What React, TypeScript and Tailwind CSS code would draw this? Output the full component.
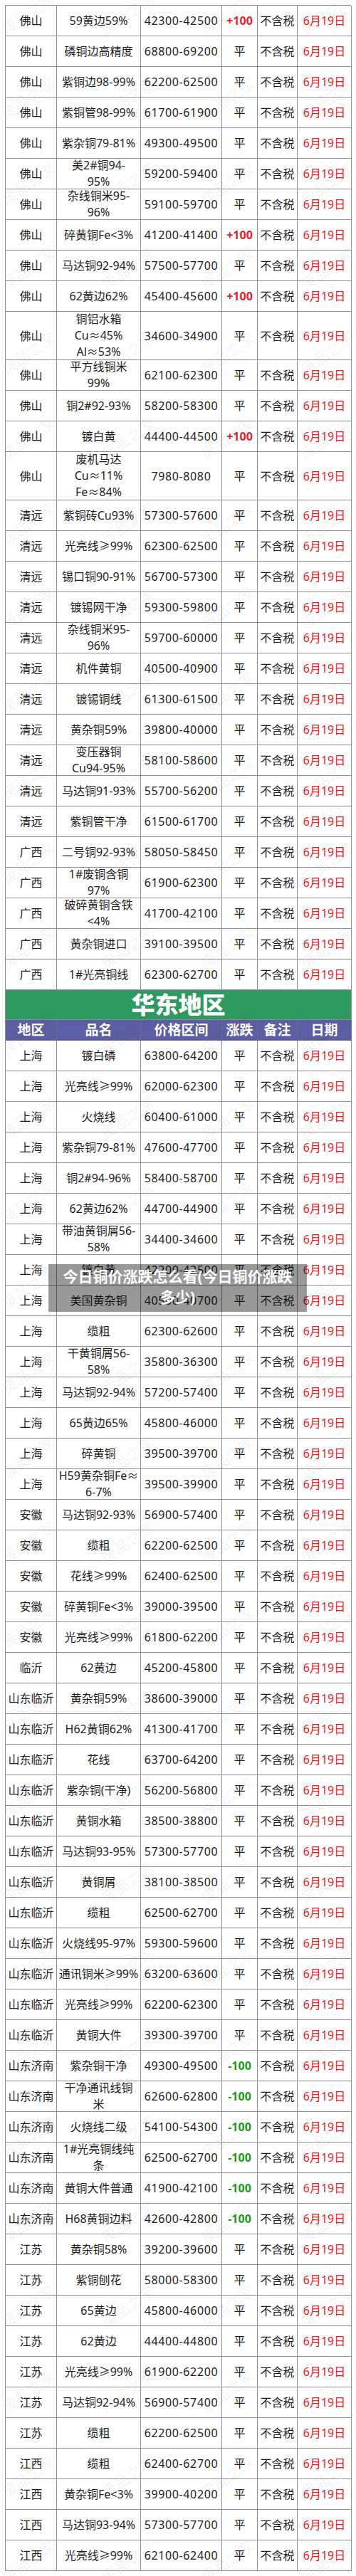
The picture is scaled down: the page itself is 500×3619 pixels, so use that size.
type Row = { r: string; p: string[]; price: string; chg: string; tall?: boolean };

// "|" splits the product name into the lines the sheet wraps it into
function row(r: string, p: string, price: string, chg = "平"): Row {
  const lines = p.split("|");
  return { r, p: lines, price, chg, tall: lines.length > 2 };
}

const SOUTH: Row[] = [
  row("佛山", "59黄边59%", "42300-42500", "+100"),
  row("佛山", "磷铜边高精度", "68800-69200"),
  row("佛山", "紫铜边98-99%", "62200-62500"),
  row("佛山", "紫铜管98-99%", "61700-61900"),
  row("佛山", "紫杂铜79-81%", "49300-49500"),
  row("佛山", "美2#铜94-|95%", "59200-59400"),
  row("佛山", "杂线铜米95-|96%", "59100-59700"),
  row("佛山", "碎黄铜Fe<3%", "41200-41400", "+100"),
  row("佛山", "马达铜92-94%", "57500-57700"),
  row("佛山", "62黄边62%", "45400-45600", "+100"),
  row("佛山", "铜铝水箱|Cu≈45%|Al≈53%", "34600-34900"),
  row("佛山", "平方线铜米|99%", "62100-62300"),
  row("佛山", "铜2#92-93%", "58200-58300"),
  row("佛山", "镀白黄", "44400-44500", "+100"),
  row("佛山", "废机马达|Cu≈11%|Fe≈84%", "7980-8080"),
  row("清远", "紫铜砖Cu93%", "57300-57600"),
  row("清远", "光亮线≥99%", "62300-62500"),
  row("清远", "锡口铜90-91%", "56700-57300"),
  row("清远", "镀锡网干净", "59300-59800"),
  row("清远", "杂线铜米95-|96%", "59700-60000"),
  row("清远", "机件黄铜", "40500-40900"),
  row("清远", "镀锡铜线", "61300-61500"),
  row("清远", "黄杂铜59%", "39800-40000"),
  row("清远", "变压器铜|Cu94-95%", "58100-58600"),
  row("清远", "马达铜91-93%", "55700-56200"),
  row("清远", "紫铜管干净", "61500-61700"),
  row("广西", "二号铜92-93%", "58050-58450"),
  row("广西", "1#废铜含铜|97%", "61900-62300"),
  row("广西", "破碎黄铜含铁|<4%", "41700-42100"),
  row("广西", "黄杂铜进口", "39100-39500"),
  row("广西", "1#光亮铜线", "62300-62700"),
];

const EAST: Row[] = [
  row("上海", "镀白磷", "63800-64200"),
  row("上海", "光亮线≥99%", "62000-62300"),
  row("上海", "火烧线", "60400-61000"),
  row("上海", "紫杂铜79-81%", "47600-47700"),
  row("上海", "铜2#94-96%", "58400-58700"),
  row("上海", "62黄边62%", "44700-44900"),
  row("上海", "带油黄铜屑56-|58%", "34400-34600"),
  row("上海", "镀白黄", "42200-42500"),
  row("上海", "美国黄杂铜", "40500-40700"),
  row("上海", "缆粗", "62300-62600"),
  row("上海", "干黄铜屑56-|58%", "35800-36300"),
  row("上海", "马达铜92-94%", "57200-57400"),
  row("上海", "65黄边65%", "45800-46000"),
  row("上海", "碎黄铜", "39500-39700"),
  row("上海", "H59黄杂铜Fe≈|6-7%", "39500-39900"),
  row("安徽", "马达铜92-93%", "56900-57400"),
  row("安徽", "缆粗", "62200-62500"),
  row("安徽", "花线≥99%", "62400-62500"),
  row("安徽", "碎黄铜Fe<3%", "39000-39500"),
  row("安徽", "光亮线≥99%", "61800-62200"),
  row("临沂", "62黄边", "45200-45800"),
  row("山东临沂", "黄杂铜59%", "38600-39000"),
  row("山东临沂", "H62黄铜62%", "41300-41700"),
  row("山东临沂", "花线", "63700-64200"),
  row("山东临沂", "紫杂铜(干净)", "56200-56800"),
  row("山东临沂", "黄铜水箱", "38500-38800"),
  row("山东临沂", "马达铜93-95%", "57300-57700"),
  row("山东临沂", "黄铜屑", "38100-38500"),
  row("山东临沂", "缆粗", "62500-62700"),
  row("山东临沂", "火烧线95-97%", "59300-59600"),
  row("山东临沂", "通讯铜米≥99%", "63200-63600"),
  row("山东临沂", "光亮线≥99%", "62200-62300"),
  row("山东临沂", "黄铜大件", "39300-39700"),
  row("山东济南", "紫杂铜干净", "49300-49500", "-100"),
  row("山东济南", "干净通讯线铜|米", "62600-62800", "-100"),
  row("山东济南", "火烧线二级", "54100-54300", "-100"),
  row("山东济南", "1#光亮铜线纯|条", "62500-62700", "-100"),
  row("山东济南", "黄铜大件普通", "41900-42100", "-100"),
  row("山东济南", "H68黄铜边料", "42600-42800", "-100"),
  row("江苏", "黄杂铜58%", "39200-39600"),
  row("江苏", "紫铜刨花", "58000-58300"),
  row("江苏", "65黄边", "45800-46000"),
  row("江苏", "62黄边", "44400-44800"),
  row("江苏", "光亮线≥99%", "61900-62200"),
  row("江苏", "马达铜92-94%", "56900-57400"),
  row("江苏", "缆粗", "62200-62500"),
  row("江西", "缆粗", "62400-62700"),
  row("江西", "黄杂铜Fe<3%", "39900-40200"),
  row("江西", "马达铜93-94%", "57300-57700"),
  row("江西", "光亮线≥99%", "62100-62400"),
];

const HEAD = ["地区", "品名", "价格区间", "涨跌", "备注", "日期"];

function Cell({ children, tall, className = "" }: { children: React.ReactNode; tall?: boolean; className?: string }) {
  return (
    <div
      className={`flex flex-col items-center justify-center border-r border-b border-[#8e8e8e] text-center whitespace-nowrap ${
        tall ? "h-[68px]" : "h-[43px]"
      } ${className}`}
    >
      {children}
    </div>
  );
}

function PriceRow({ d }: { d: Row }) {
  const chgColor =
    d.chg === "+100" ? "text-[#e8202a] font-bold" : d.chg === "-100" ? "text-[#1e9a1e] font-bold" : "";
  return (
    <>
      <Cell tall={d.tall}>{d.r}</Cell>
      <Cell tall={d.tall} className="leading-[23px]">
        {d.p.map((l) => (
          <span key={l}>{l}</span>
        ))}
      </Cell>
      <Cell tall={d.tall} className="tracking-[0.6px]">{d.price}</Cell>
      <Cell tall={d.tall} className={chgColor}>{d.chg}</Cell>
      <Cell tall={d.tall}>不含税</Cell>
      <Cell tall={d.tall} className="text-[#ec1c24]">6月19日</Cell>
    </>
  );
}

// faint diagonal "废品之家" marks tiled over the sheet
function Watermark() {
  const marks: { x: number; y: number }[] = [];
  for (let k = 0; k < 31; k++) {
    for (const x of [40, 180, 320, 460]) marks.push({ x, y: 20 + k * 119.3 });
  }
  return (
    <div className="pointer-events-none absolute inset-0 overflow-hidden">
      {marks.map((m, i) => (
        <span
          key={i}
          className="absolute -translate-x-1/2 -translate-y-1/2 -rotate-[35deg] whitespace-nowrap text-[21px] text-black/[0.06]"
          style={{ left: m.x, top: m.y }}
        >
          废品之家
        </span>
      ))}
    </div>
  );
}

export default function App() {
  return (
    <div className="relative w-[500px] bg-white px-[7px] pt-[7px] pb-[8px] font-['Noto_Sans','Noto_Sans_CJK_SC',sans-serif] text-[16px] text-[#1c1c1c]">
      <div className="grid grid-cols-[72px_118px_114px_50px_56px_76px] border-t border-l border-[#8e8e8e]">
        {SOUTH.map((d, i) => (
          <PriceRow key={"s" + i} d={d} />
        ))}
        <div className="col-span-6 flex h-[42px] items-center justify-center border-r border-b border-[#8e8e8e] bg-[#2f9a5f] text-[33px] font-black leading-none text-white">
          华东地区
        </div>
        {HEAD.map((h) => (
          <div
            key={h}
            className="flex h-[29px] items-center justify-center border-r border-b border-[#6a6a8e] bg-[#5b5ea3] text-[19px] font-bold leading-none text-white"
          >
            {h}
          </div>
        ))}
        {EAST.map((d, i) => (
          <PriceRow key={"e" + i} d={d} />
        ))}
      </div>

      <Watermark />

      <div className="absolute top-[1776px] left-[68px] flex h-[67px] w-[363px] flex-col items-center bg-black/40 pt-[3px] text-[21px] font-bold leading-[29px] whitespace-nowrap text-white">
        <span>今日铜价涨跌怎么看(今日铜价涨跌</span>
        <span>多少)</span>
      </div>
    </div>
  );
}
